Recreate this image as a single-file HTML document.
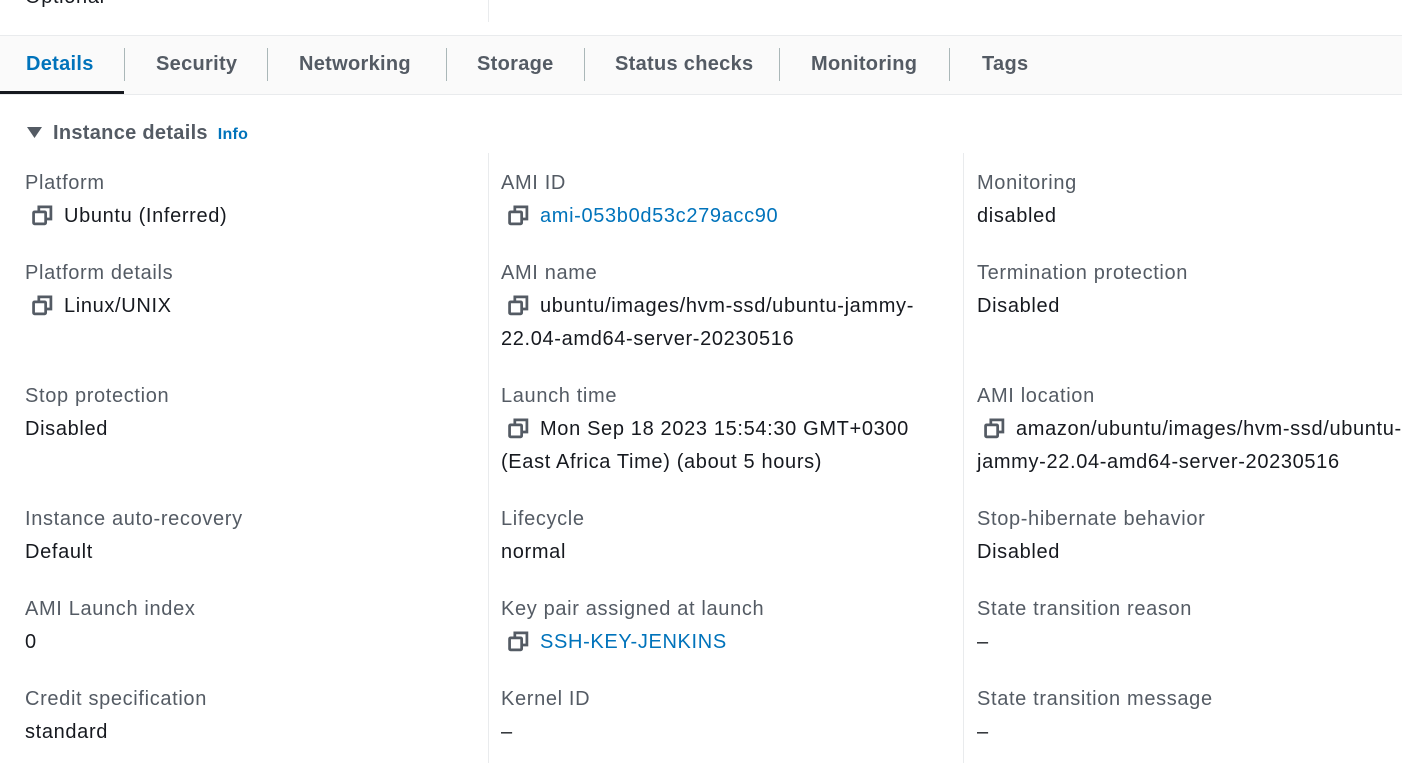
<!DOCTYPE html>
<html><head><style>
body{margin:0;width:1402px;height:763px;overflow:hidden;background:#fff;font-family:"Liberation Sans",sans-serif;color:#16191f;position:relative}
.a{position:absolute;white-space:nowrap;letter-spacing:0.65px}
.tabs{position:absolute;left:0;top:35px;width:1402px;height:58px;background:#fafafa;border-top:1px solid #e9ebed;border-bottom:1px solid #e9ebed}
.tab{position:absolute;top:17px;font-size:20px;font-weight:bold;color:#545b64;letter-spacing:0.3px}
.div{position:absolute;top:12px;width:1px;height:33px;background:#aab7b8}
.l{font-size:20px;color:#545b64}
.v{font-size:20px;color:#16191f}
.lk{color:#0073bb}
.vl{position:absolute;width:1px;background:#e9ebed}
svg{vertical-align:-4px;margin-right:11px}
</style></head><body>
<div class="a v" style="left:25px;top:-14px">Optional</div>
<div class="vl" style="left:488px;top:0;height:22px"></div>
<div class="tabs">
<div class="tab" style="left:26px;color:#0073bb">Details</div>
<div class="div" style="left:124px"></div>
<div class="tab" style="left:156px">Security</div>
<div class="div" style="left:267px"></div>
<div class="tab" style="left:299px">Networking</div>
<div class="div" style="left:446px"></div>
<div class="tab" style="left:477px">Storage</div>
<div class="div" style="left:584px"></div>
<div class="tab" style="left:615px">Status checks</div>
<div class="div" style="left:779px"></div>
<div class="tab" style="left:811px">Monitoring</div>
<div class="div" style="left:949px"></div>
<div class="tab" style="left:982px">Tags</div>
<div style="position:absolute;left:0;top:55px;width:124px;height:3px;background:#16191f"></div>
</div>
<svg style="position:absolute;left:27px;top:127px;margin:0" width="15" height="12"><path d="M0 0H15L7.5 11Z" fill="#545b64"/></svg>
<div class="a" style="left:53px;top:122px;font-size:20px;font-weight:bold;color:#545b64;letter-spacing:0.3px">Instance details <span style="font-size:16px;color:#0073bb;margin-left:4px">Info</span></div>
<div class="vl" style="left:488px;top:153px;height:610px"></div>
<div class="vl" style="left:963px;top:153px;height:610px"></div>
<svg width="0" height="0" style="position:absolute"><defs><symbol id="c" viewBox="0 0 20 20"><rect x="1.5" y="6.5" width="11.5" height="11.5" rx="1" fill="none" stroke="#545b64" stroke-width="2.6"/><path d="M6.5 6V1.8h11.5v11.5h-4.5" fill="none" stroke="#545b64" stroke-width="2.6"/></symbol></defs></svg>

<div class="a l" style="left:25px;top:172px">Platform</div>
<div class="a v" style="left:32px;top:205px"><svg width="21" height="21"><use href="#c"/></svg>Ubuntu (Inferred)</div>
<div class="a l" style="left:25px;top:262px">Platform details</div>
<div class="a v" style="left:32px;top:295px"><svg width="21" height="21"><use href="#c"/></svg>Linux/UNIX</div>
<div class="a l" style="left:25px;top:385px">Stop protection</div>
<div class="a v" style="left:25px;top:418px">Disabled</div>
<div class="a l" style="left:25px;top:508px">Instance auto-recovery</div>
<div class="a v" style="left:25px;top:541px">Default</div>
<div class="a l" style="left:25px;top:598px">AMI Launch index</div>
<div class="a v" style="left:25px;top:631px">0</div>
<div class="a l" style="left:25px;top:688px">Credit specification</div>
<div class="a v" style="left:25px;top:721px">standard</div>

<div class="a l" style="left:501px;top:172px">AMI ID</div>
<div class="a v lk" style="left:508px;top:205px"><svg width="21" height="21"><use href="#c"/></svg>ami-053b0d53c279acc90</div>
<div class="a l" style="left:501px;top:262px">AMI name</div>
<div class="a v" style="left:508px;top:295px"><svg width="21" height="21"><use href="#c"/></svg>ubuntu/images/hvm-ssd/ubuntu-jammy-</div>
<div class="a v" style="left:501px;top:328px">22.04-amd64-server-20230516</div>
<div class="a l" style="left:501px;top:385px">Launch time</div>
<div class="a v" style="left:508px;top:418px"><svg width="21" height="21"><use href="#c"/></svg>Mon Sep 18 2023 15:54:30 GMT+0300</div>
<div class="a v" style="left:501px;top:451px">(East Africa Time) (about 5 hours)</div>
<div class="a l" style="left:501px;top:508px">Lifecycle</div>
<div class="a v" style="left:501px;top:541px">normal</div>
<div class="a l" style="left:501px;top:598px">Key pair assigned at launch</div>
<div class="a v lk" style="left:508px;top:631px"><svg width="21" height="21"><use href="#c"/></svg>SSH-KEY-JENKINS</div>
<div class="a l" style="left:501px;top:688px">Kernel ID</div>
<div class="a v" style="left:501px;top:721px">–</div>

<div class="a l" style="left:977px;top:172px">Monitoring</div>
<div class="a v" style="left:977px;top:205px">disabled</div>
<div class="a l" style="left:977px;top:262px">Termination protection</div>
<div class="a v" style="left:977px;top:295px">Disabled</div>
<div class="a l" style="left:977px;top:385px">AMI location</div>
<div class="a v" style="left:984px;top:418px"><svg width="21" height="21"><use href="#c"/></svg>amazon/ubuntu/images/hvm-ssd/ubuntu-</div>
<div class="a v" style="left:977px;top:451px">jammy-22.04-amd64-server-20230516</div>
<div class="a l" style="left:977px;top:508px">Stop-hibernate behavior</div>
<div class="a v" style="left:977px;top:541px">Disabled</div>
<div class="a l" style="left:977px;top:598px">State transition reason</div>
<div class="a v" style="left:977px;top:631px">–</div>
<div class="a l" style="left:977px;top:688px">State transition message</div>
<div class="a v" style="left:977px;top:721px">–</div>
</body></html>
